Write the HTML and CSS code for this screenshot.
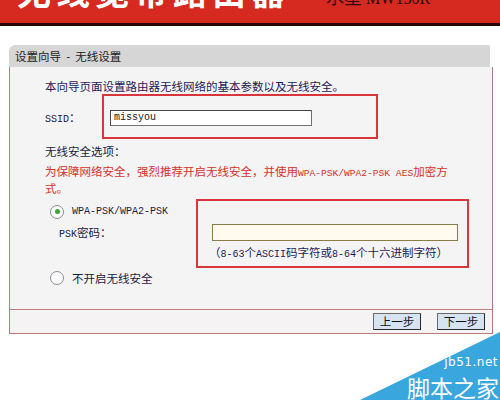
FILE: index.html
```html
<!DOCTYPE html>
<html lang="zh-CN">
<head>
<meta charset="utf-8">
<title>设置向导 - 无线设置</title>
<link rel="stylesheet" href="styles.css">
</head>
<body>
<header class="banner">
  <span class="big">中无线宽带路由器</span>
  <span class="model">水星 <span class="model-en">MW150R</span></span>
</header>
<div class="panel">
  <div class="ptitle">设置向导 &nbsp;- &nbsp;无线设置</div>
  <div class="pbody">
    <p class="intro">本向导页面设置路由器无线网络的基本参数以及无线安全。</p>
    <div class="ssid-row">
      <span class="label"><span class="en">SSID</span>：</span>
      <div class="redbox ssid-box">
        <input class="ssid-input" type="text" value="missyou">
      </div>
    </div>
    <p class="sec-title">无线安全选项：</p>
    <p class="warn"><span>为保障网络安全，强烈推荐开启无线安全，并使用</span><span class="en">WPA-PSK/WPA2-PSK AES</span><span>加密方式。</span></p>
    <div class="sec-grid">
      <div class="sec-left">
        <div class="radio-row"><span class="radio checked"></span><span class="en">WPA-PSK/WPA2-PSK</span></div>
        <div class="psk-label"><span class="en">PSK</span>密码：</div>
      </div>
      <div class="redbox psk-box">
        <input class="psk-input" type="text" value="">
        <div class="hint">（<span class="en">8-63</span>个<span class="en">ASCII</span>码字符或<span class="en">8-64</span>个十六进制字符）</div>
      </div>
    </div>
    <div class="radio-row off"><span class="radio"></span><span>不开启无线安全</span></div>
  </div>
  <div class="pfoot">
    <button class="btn">上一步</button>
    <button class="btn">下一步</button>
  </div>
</div>
<div class="wm">
  <svg class="wm-tri" width="140" height="68" viewBox="0 0 140 68"><polygon points="0,68 140,0 140,68" fill="#3aa6de"/></svg>
  <span class="wm-url">jb51.net</span>
  <span class="wm-name">脚本之家</span>
</div>
</body>
</html>
```
FILE: styles.css
```css
html, body {
  margin: 0;
  padding: 0;
  background: #ffffff;
  font-family: "Noto Sans CJK SC", "Noto Sans", sans-serif;
  font-size: 11.5px;
  color: #1e1e50;
  overflow: hidden;
  height: 400px;
}

.en {
  font-family: "Liberation Mono", "Noto Sans CJK SC", monospace;
  font-size: 10px;
  line-height: 1;
  display: inline-block;
}

.banner {
  height: 23px;
  background: #d6291f;
  border-bottom: 3px solid #2a0707;
  display: flex;
  align-items: flex-end;
  overflow: hidden;
}

.big {
  color: #ffffff;
  font-size: 34px;
  line-height: 34px;
  letter-spacing: 5px;
  font-weight: bold;
  margin-left: -22px;
  margin-bottom: 15px;
  white-space: nowrap;
}

.model {
  color: #2a0b0b;
  font-size: 18px;
  line-height: 18px;
  margin-left: 36px;
  margin-bottom: 15px;
  white-space: nowrap;
}

.model-en {
  font-family: "Liberation Serif", serif;
  font-size: 16px;
}

.panel {
  margin: 19px 0 0 9px;
  width: 484px;
}

.ptitle {
  height: 22px;
  line-height: 22px;
  background: #d6d6d6;
  border-radius: 6px 2px 0 0;
  padding-left: 6px;
  color: #202020;
  font-size: 11.5px;
  margin-right: 3px;
}

.pbody {
  height: 242px;
  background: #f5f4f4;
  border-left: 1px solid #b97b78;
  border-right: 1px solid #a08080;
  padding: 0 0 0 35px;
  box-sizing: border-box;
  display: flex;
  flex-direction: column;
}

.intro {
  margin: 11px 0 0 0;
  line-height: 16px;
  color: #1b1b5a;
}

.ssid-row {
  display: flex;
  align-items: center;
  height: 45px;
}

.label {
  width: 57px;
  color: #1b1b40;
}

.redbox {
  border: 2px solid #d9363c;
  box-sizing: border-box;
}

.ssid-box {
  width: 276px;
  height: 45px;
  padding: 11px 0 0 6px;
}

.ssid-input {
  width: 202px;
  height: 16px;
  box-sizing: border-box;
  border: 1px solid #707070;
  border-top-color: #444;
  border-left-color: #444;
  background: #ffffff;
  padding: 0 3px;
  margin: 0;
  font-family: "Liberation Mono", monospace;
  font-size: 10px;
  color: #202020;
  outline: none;
}

.sec-title {
  margin: 4px 0 0 0;
  line-height: 16px;
  color: #1b1b40;
}

.warn {
  margin: 4px 0 0 0;
  line-height: 17px;
  color: #d8302a;
  width: 420px;
}

.warn .en {
  font-size: 9.6px;
}

.sec-grid {
  display: flex;
  margin-top: 2px;
  height: 69px;
}

.sec-left {
  width: 146px;
  padding-top: 2px;
  padding-left: 5px;
}

.radio-row {
  display: flex;
  align-items: center;
  height: 21px;
  color: #1b1b40;
}

.radio {
  width: 12px;
  height: 12px;
  border: 1px solid #8a8f96;
  border-radius: 50%;
  background: #fbfbfb;
  margin-right: 8px;
  display: flex;
  align-items: center;
  justify-content: center;
  flex: none;
}

.radio.checked::after {
  content: "";
  width: 5px;
  height: 5px;
  border-radius: 50%;
  background: #3aa83a;
}

.psk-label {
  height: 21px;
  line-height: 21px;
  padding-left: 9px;
  color: #1b1b40;
}

.psk-box {
  width: 273px;
  height: 69px;
  padding: 23px 0 0 14px;
}

.psk-input {
  display: block;
  width: 246px;
  height: 17px;
  box-sizing: border-box;
  border: 1px solid #8a7c48;
  background: #fffcef;
  margin: 0;
  padding: 0;
  outline: none;
}

.hint {
  margin-top: 3px;
  line-height: 16px;
  color: #1b1b5a;
  white-space: nowrap;
  margin-left: -3px;
}

.radio-row.off {
  margin-top: 1px;
  height: 17px;
  padding-left: 5px;
}

.pfoot {
  height: 25px;
  background: #f5f3f3;
  border: 1px solid #b97b78;
  border-top: 1px solid #c0807a;
  box-sizing: border-box;
  display: flex;
  justify-content: flex-end;
  align-items: center;
  gap: 16px;
  padding-right: 7px;
}

.btn {
  width: 48px;
  height: 17px;
  padding: 0;
  margin: 0;
  border: 1px solid #2a2a2a;
  border-top-color: #6a6a6a;
  border-left-color: #6a6a6a;
  background: #d6e3f1;
  font-family: "Noto Sans CJK SC", sans-serif;
  font-size: 11.5px;
  line-height: 15px;
  color: #111;
}

.wm {
  position: absolute;
  right: 0;
  bottom: 0;
  width: 140px;
  height: 68px;
}

.wm-tri {
  position: absolute;
  right: 0;
  bottom: 0;
  display: block;
}

.wm-url {
  position: absolute;
  right: 2px;
  top: 24px;
  font-family: "DejaVu Sans", sans-serif;
  font-size: 12px;
  line-height: 12px;
  color: #ffffff;
  letter-spacing: 0.5px;
}

.wm-name {
  position: absolute;
  right: 1px;
  bottom: 1px;
  font-size: 23px;
  line-height: 23px;
  color: #ffffff;
}
```
